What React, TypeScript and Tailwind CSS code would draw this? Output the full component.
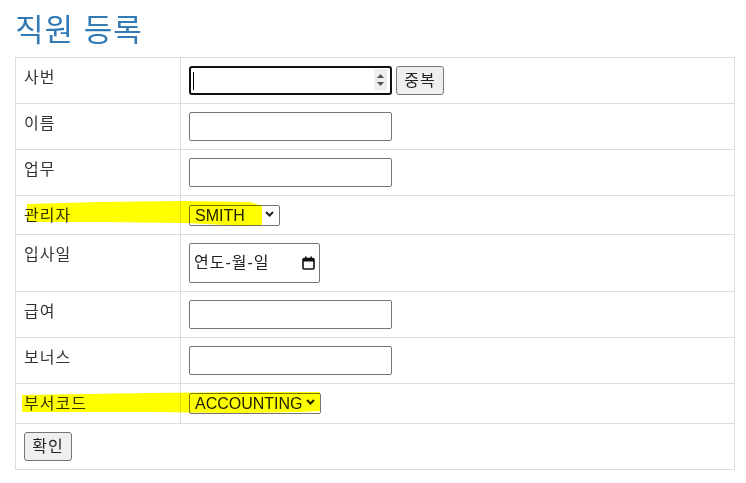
import type { ReactNode } from 'react';

const font = '"Liberation Sans", "Noto Sans CJK KR", sans-serif';

function Row({
  label,
  height,
  first,
  children,
}: {
  readonly label?: string;
  readonly height: string;
  readonly first?: boolean;
  readonly children: ReactNode;
}) {
  return (
    <div className={`flex ${height} ${first ? '' : 'border-t border-[#dddddd]'}`}>
      <div className="w-[165px] shrink-0 border-r border-[#dddddd] px-[8px] pt-[9px] leading-[22px] tracking-[1px]">
        {label}
      </div>
      <div className="flex flex-1 items-start px-[8px] pt-[8px]">{children}</div>
    </div>
  );
}

function TextBox() {
  return (
    <input
      type="text"
      className="h-[29px] w-[203px] rounded-[2px] border border-[#767676] bg-white px-[3px] text-[16px] outline-none"
    />
  );
}

function Chevron() {
  return (
    <svg width="9" height="6" viewBox="0 0 9 6" className="pointer-events-none absolute right-[6px] top-[7px]">
      <path d="M1 1 L4.5 4.5 L8 1" fill="none" stroke="#222" strokeWidth="2" />
    </svg>
  );
}

function Select({ value, width }: { readonly value: string; readonly width: string }) {
  return (
    <div className={`relative ${width}`}>
      <select
        defaultValue={value}
        className={`h-[21px] ${width} appearance-none rounded-[2px] border border-[#767676] bg-white pl-[5px] text-[16px] leading-[19px] text-[#222] outline-none`}
      >
        <option>{value}</option>
      </select>
      <Chevron />
    </div>
  );
}

function Btn({ children }: { readonly children: ReactNode }) {
  return (
    <button
      type="button"
      className="h-[29px] w-[48px] rounded-[3px] border border-[#767676] bg-[#efefef] text-[16px] leading-[20px] tracking-[1px] text-[#222]"
    >
      {children}
    </button>
  );
}

export default function App() {
  return (
    <div className="relative min-h-[483px] bg-white text-[16px] text-[#333]" style={{ fontFamily: font }}>
      <h2 className="ml-[15px] pt-[14px] text-[31px] leading-[33px] tracking-[1px] text-[#337ab7]">직원 등록</h2>
      <div className="ml-[15px] mt-[10px] w-[720px] border border-[#dddddd]">
        <Row label="사번" height="h-[45px]" first>
          <div className="relative h-[29px] w-[203px] rounded-[3px] border-2 border-[#111] bg-white">
            <input type="number" className="h-full w-full bg-transparent px-[2px] outline-none" />
            <span className="absolute left-[2px] top-[4px] h-[18px] w-px bg-black" />
            <span className="absolute right-[3px] top-[1px] flex h-[21px] w-[13px] flex-col items-center justify-center gap-[4px] bg-[#efefef]">
              <svg width="7" height="4" viewBox="0 0 7 4">
                <path d="M0 4 L3.5 0 L7 4 Z" fill="#505050" />
              </svg>
              <svg width="7" height="4" viewBox="0 0 7 4">
                <path d="M0 0 L3.5 4 L7 0 Z" fill="#505050" />
              </svg>
            </span>
          </div>
          <div className="ml-[4px]">
            <Btn>중복</Btn>
          </div>
        </Row>
        <Row label="이름" height="h-[46px]">
          <TextBox />
        </Row>
        <Row label="업무" height="h-[46px]">
          <TextBox />
        </Row>
        <Row label="관리자" height="h-[39px]">
          <Select value="SMITH" width="w-[91px]" />
        </Row>
        <Row label="입사일" height="h-[57px]">
          <div className="flex h-[40px] w-[131px] items-center justify-between rounded-[2px] border border-[#767676] bg-white pl-[4px] pr-[4px] text-[16px] tracking-[1px] text-[#222]">
            <span>연도-월-일</span>
            <svg width="13" height="14" viewBox="0 0 13 14">
              <rect x="1" y="2.5" width="11" height="10.5" rx="1" fill="none" stroke="#111" strokeWidth="1.6" />
              <rect x="1" y="2.5" width="11" height="3" fill="#111" />
              <rect x="3" y="0.5" width="1.6" height="3" fill="#111" />
              <rect x="8.4" y="0.5" width="1.6" height="3" fill="#111" />
            </svg>
          </div>
        </Row>
        <Row label="급여" height="h-[46px]">
          <TextBox />
        </Row>
        <Row label="보너스" height="h-[46px]">
          <TextBox />
        </Row>
        <Row label="부서코드" height="h-[40px]">
          <Select value="ACCOUNTING" width="w-[132px]" />
        </Row>
        <div className="h-[46px] border-t border-[#dddddd] px-[8px] pt-[8px]">
          <Btn>확인</Btn>
        </div>
      </div>
      <svg
        width="746"
        height="483"
        viewBox="0 0 746 483"
        className="pointer-events-none absolute left-0 top-0 mix-blend-multiply"
      >
        <path
          d="M27 204 L100 202 L185 201 L250 202 L262 206 L262 225 L245 226 L185 223 L100 222 L27 222 Z"
          fill="#ffff00"
        />
        <path
          d="M22 395 L150 393 L250 392 L320 392 L320 411 L300 412 L230 413 L150 412 L22 412 Z"
          fill="#ffff00"
        />
      </svg>
    </div>
  );
}
